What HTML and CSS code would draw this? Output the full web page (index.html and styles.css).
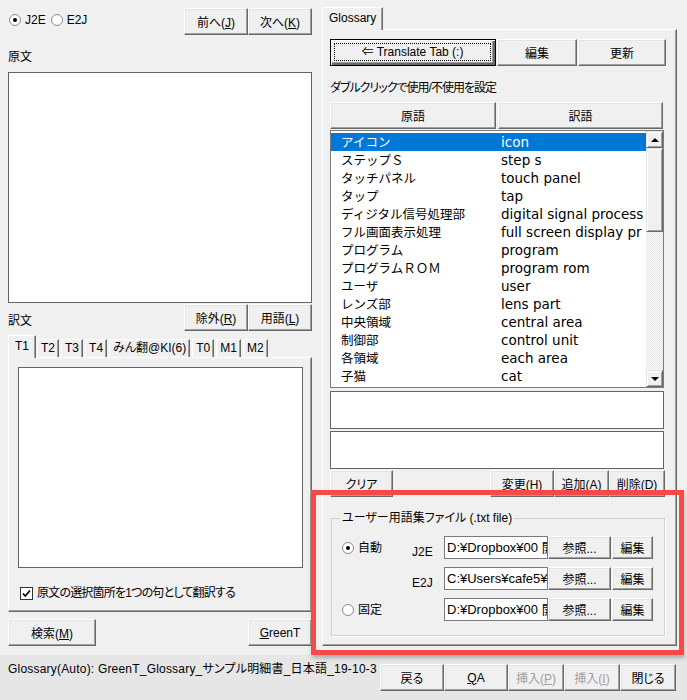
FILE: index.html
```html
<!DOCTYPE html>
<html lang="ja">
<head>
    <meta charset="UTF-8">
    <title>GreenT Glossary</title>
    <link rel="stylesheet" href="styles.css">
</head>
<body>
<div class="app">
    <div class="main">
        <!-- left side: source / translation -->
        <section class="left">
            <div class="top-row">
                <div class="radios">
                    <span class="radio"><span class="radio-dot on"></span>J2E</span>
                    <span class="radio"><span class="radio-dot"></span>E2J</span>
                </div>
                <div class="btn-pair">
                    <button class="btn w64">前へ(<u>J</u>)</button>
                    <button class="btn w64">次へ(<u>K</u>)</button>
                </div>
            </div>
            <div class="caption src-cap">原文</div>
            <div class="textbox src-box"></div>
            <div class="mid-row">
                <div class="caption mid-cap">訳文</div>
                <div class="btn-pair">
                    <button class="btn w64">除外(<u>R</u>)</button>
                    <button class="btn w64">用語(<u>L</u>)</button>
                </div>
            </div>
            <div class="tabstrip left-tabs">
                <span class="tab active">T1</span>
                <span class="tab">T2</span>
                <span class="tab">T3</span>
                <span class="tab">T4</span>
                <span class="tab">みん翻@KI(6)</span>
                <span class="tab">T0</span>
                <span class="tab">M1</span>
                <span class="tab">M2</span>
            </div>
            <div class="tab-panel left-panel">
                <div class="textbox out-box"></div>
                <div class="check">
                    <span class="checkbox">
                        <svg width="11" height="11" viewBox="0 0 11 11"><path d="M2 5.5 L4.3 8 L9 2.5" fill="none" stroke="#000" stroke-width="1.7"/></svg>
                    </span>
                    <span class="check-text">原文の選択箇所を1つの句として翻訳する</span>
                </div>
            </div>
            <div class="bottom-row">
                <button class="btn w88">検索(<u>M</u>)</button>
                <button class="btn w64"><u>G</u>reenT</button>
            </div>
        </section>

        <!-- right side: glossary tab -->
        <section class="right">
            <div class="tabstrip">
                <span class="tab active gloss-tab">Glossary</span>
            </div>
            <div class="tab-panel right-panel">
                <div class="tool-row">
                    <button class="btn default w166"><span class="focus">⇐ Translate Tab (:)</span></button>
                    <button class="btn w80">編集</button>
                    <button class="btn w88">更新</button>
                </div>
                <div class="note">ダブルクリックで使用/不使用を設定</div>
                <div class="list-head">
                    <button class="btn w166">原語</button>
                    <button class="btn w165">訳語</button>
                </div>
                <div class="list">
                    <div class="rows">
                        <div class="row selected"><span class="jp">アイコン</span><span class="en">icon</span></div>
                        <div class="row"><span class="jp">ステップＳ</span><span class="en">step s</span></div>
                        <div class="row"><span class="jp">タッチパネル</span><span class="en">touch panel</span></div>
                        <div class="row"><span class="jp">タップ</span><span class="en">tap</span></div>
                        <div class="row"><span class="jp">ディジタル信号処理部</span><span class="en">digital signal process</span></div>
                        <div class="row"><span class="jp">フル画面表示処理</span><span class="en">full screen display pr</span></div>
                        <div class="row"><span class="jp">プログラム</span><span class="en">program</span></div>
                        <div class="row"><span class="jp">プログラムＲＯＭ</span><span class="en">program rom</span></div>
                        <div class="row"><span class="jp">ユーザ</span><span class="en">user</span></div>
                        <div class="row"><span class="jp">レンズ部</span><span class="en">lens part</span></div>
                        <div class="row"><span class="jp">中央領域</span><span class="en">central area</span></div>
                        <div class="row"><span class="jp">制御部</span><span class="en">control unit</span></div>
                        <div class="row"><span class="jp">各領域</span><span class="en">each area</span></div>
                        <div class="row"><span class="jp">子猫</span><span class="en">cat</span></div>
                    </div>
                    <div class="scrollbar">
                        <div class="sb-btn"><span class="arrow up"></span></div>
                        <div class="sb-thumb"></div>
                        <div class="sb-track"></div>
                        <div class="sb-btn"><span class="arrow down"></span></div>
                    </div>
                </div>
                <div class="textbox entry-box first"></div>
                <div class="textbox entry-box"></div>
                <div class="edit-row">
                    <button class="btn w63">クリア</button>
                    <div class="edit-btns">
                        <button class="btn w64">変更(<u>H</u>)</button>
                        <button class="btn w55">追加(<u>A</u>)</button>
                        <button class="btn w56">削除(<u>D</u>)</button>
                    </div>
                </div>
                <fieldset class="user-files">
                    <legend>ユーザー用語集ファイル (.txt file)</legend>
                    <div class="file-row">
                        <span class="radio"><span class="radio-dot on"></span>自動</span>
                        <span class="lang">J2E</span>
                        <div class="path">D:¥Dropbox¥00 開</div>
                        <button class="btn small w63">参照...</button>
                        <button class="btn small w41">編集</button>
                    </div>
                    <div class="file-row">
                        <span></span>
                        <span class="lang">E2J</span>
                        <div class="path">C:¥Users¥cafe5¥</div>
                        <button class="btn small w63">参照...</button>
                        <button class="btn small w41">編集</button>
                    </div>
                    <div class="file-row">
                        <span class="radio"><span class="radio-dot"></span>固定</span>
                        <span class="lang"></span>
                        <div class="path">D:¥Dropbox¥00 開</div>
                        <button class="btn small w63">参照...</button>
                        <button class="btn small w41">編集</button>
                    </div>
                </fieldset>
            </div>
        </section>
    </div>

    <footer class="status">
        <div class="status-text">Glossary(Auto): GreenT_Glossary_サンプル明細書_日本語_19-10-3</div>
        <div class="footer-btns">
            <button class="btn w64">戻る</button>
            <button class="btn w64"><u>Q</u>A</button>
            <button class="btn w56" disabled>挿入(<u>P</u>)</button>
            <button class="btn w56" disabled>挿入(<u>I</u>)</button>
            <button class="btn w56">閉じる</button>
        </div>
    </footer>

    <!-- red highlight drawn over the user glossary group -->
    <div class="highlight"></div>
</div>
</body>
</html>
```

FILE: styles.css
```css
* {
    box-sizing: border-box;
}
body {
    margin: 0;
    width: 687px;
    height: 700px;
    overflow: hidden;
    background: #f0f0f0;
    font-family: "Liberation Sans", "Noto Sans CJK JP", sans-serif;
    font-size: 12px;
    color: #000;
    font-feature-settings: "palt";
}
.app {
    position: relative;
    height: 700px;
}
.main {
    display: flex;
    height: 655px;
    padding-left: 8px;
}

/* common controls */
.btn {
    height: 27px;
    padding: 0;
    background: #f0f0f0;
    border: 1px solid;
    border-color: #fff #696969 #696969 #fff;
    box-shadow: inset -1px -1px #a0a0a0, inset 1px 1px #e3e3e3;
    font: inherit;
    color: #000;
    flex-shrink: 0;
}
.btn:disabled {
    color: #a0a0a0;
}
.btn.default {
    border-color: #000;
    box-shadow: inset 1px 1px #fff, inset -2px -2px #696969, inset -3px -3px #a0a0a0;
}
.btn .focus {
    display: block;
    margin: 3px 4px 4px 3px;
    height: 18px;
    line-height: 16px;
    border: 1px dotted #000;
}
.btn.small {
    height: 23px;
}
.w41 { width: 41px; }
.w55 { width: 55px; }
.w56 { width: 56px; }
.w63 { width: 63px; }
.w64 { width: 64px; }
.w80 { width: 80px; }
.w88 { width: 88px; }
.w165 { width: 165px; }
.w166 { width: 166px; }

.textbox {
    background: #fff;
    border: 1px solid #646464;
}
.caption {
    line-height: 16px;
}
.radio {
    display: flex;
    align-items: center;
    gap: 4px;
    line-height: 16px;
}
.radio-dot {
    width: 12px;
    height: 12px;
    border-radius: 50%;
    border: 1px solid #8c8c8c;
    background: #fff;
    display: flex;
    align-items: center;
    justify-content: center;
}
.radio-dot.on::after {
    content: "";
    width: 4px;
    height: 4px;
    border-radius: 50%;
    background: #000;
}
.btn-pair {
    display: flex;
}

/* tabs */
.tabstrip {
    display: flex;
    align-items: flex-end;
}
.tab {
    height: 18px;
    line-height: 16px;
    padding: 0 3px;
    margin-right: 2px;
    border: 1px solid;
    border-bottom: none;
    border-color: #fff #696969 transparent #fff;
    box-shadow: inset -1px 0 #a0a0a0;
    white-space: nowrap;
}
.tab.active {
    position: relative;
    z-index: 1;
    height: 23px;
    margin-bottom: -1px;
    padding: 2px 6px 0;
    margin-right: 1px;
    background: #f0f0f0;
}
.tab-panel {
    border: 1px solid;
    border-color: #fff #696969 #696969 #fff;
    box-shadow: inset -1px -1px #a0a0a0;
}

/* left column */
.left {
    width: 304px;
    display: flex;
    flex-direction: column;
    padding-top: 8px;
}
.top-row {
    display: flex;
    justify-content: space-between;
    height: 27px;
}
.radios {
    display: flex;
    gap: 5px;
    padding: 4px 0 0 1px;
    align-items: flex-start;
}
.src-cap {
    padding: 14px 0 7px;
}
.src-box {
    height: 231px;
}
.mid-row {
    display: flex;
    justify-content: space-between;
    align-items: flex-end;
    height: 27px;
    margin-top: 1px;
}
.mid-cap {
    margin-bottom: 2px;
}
.left-tabs {
    height: 26px;
}
.left-panel {
    height: 255px;
    padding: 9px 0 0 9px;
}
.out-box {
    width: 285px;
    height: 201px;
}
.check {
    display: flex;
    align-items: center;
    gap: 4px;
    margin: 17px 0 0 2px;
    line-height: 16px;
}
.check-text {
    letter-spacing: -0.8px;
}
.checkbox {
    width: 13px;
    height: 13px;
    border: 1px solid #333;
    background: #fff;
    display: flex;
    align-items: center;
    justify-content: center;
}
.checkbox svg {
    display: block;
}
.bottom-row {
    display: flex;
    justify-content: space-between;
    margin-top: 7px;
}

/* right column */
.right {
    width: 355px;
    margin-left: 10px;
    display: flex;
    flex-direction: column;
    padding-top: 7px;
}
.gloss-tab {
    padding: 3px 5px 0 5px;
    height: 23px;
}
.right-panel {
    height: 617px;
    padding: 9px 0 0 7px;
}
.tool-row {
    display: flex;
    gap: 1px;
}
.note {
    line-height: 16px;
    margin-top: 14px;
    letter-spacing: -1px;
}
.list-head {
    display: flex;
    gap: 2px;
    margin-top: 6px;
}
.list {
    display: flex;
    width: 334px;
    height: 258px;
    margin-top: 1px;
    background: #fff;
    border: 1px solid #7a7a7a;
}
.rows {
    flex: 1;
    padding-top: 2px;
    overflow: hidden;
}
.row {
    display: flex;
    height: 18px;
    line-height: 18px;
    padding-left: 10px;
    white-space: nowrap;
}
.row.selected {
    background: #0078d7;
    color: #fff;
}
.row .jp {
    width: 160px;
    flex-shrink: 0;
    font-family: "Noto Sans CJK JP", sans-serif;
    font-size: 12.5px;
    font-feature-settings: normal;
}
.row .en {
    font-family: "DejaVu Sans", sans-serif;
    font-size: 13.5px;
}
.scrollbar {
    width: 17px;
    display: flex;
    flex-direction: column;
    background-color: #fff;
    background-image: conic-gradient(#e4e4e4 25%, transparent 0 50%, #e4e4e4 0 75%, transparent 0);
    background-size: 2px 2px;
}
.sb-btn, .sb-thumb {
    background: #f0f0f0;
    border: 1px solid;
    border-color: #e3e3e3 #696969 #696969 #e3e3e3;
    box-shadow: inset 1px 1px #fff, inset -1px -1px #a0a0a0;
}
.sb-btn {
    height: 17px;
    display: flex;
    align-items: center;
    justify-content: center;
}
.sb-thumb {
    height: 84px;
}
.sb-track {
    flex: 1;
}
.arrow {
    width: 0;
    height: 0;
    border-left: 4px solid transparent;
    border-right: 4px solid transparent;
}
.arrow.up {
    border-bottom: 4px solid #000;
}
.arrow.down {
    border-top: 4px solid #000;
}
.entry-box {
    width: 334px;
    height: 38px;
    margin-top: 2px;
}
.entry-box.first {
    margin-top: 3px;
}
.edit-row {
    display: flex;
    justify-content: space-between;
    width: 335px;
    margin-top: 1px;
}
.edit-btns {
    display: flex;
}
.user-files {
    width: 334px;
    margin: 13px 0 0 1px;
    padding: 10px 0 14px 10px;
    border: 1px solid #d0d0d0;
    box-shadow: 1px 1px #fff;
}
.user-files legend {
    padding: 0 2px;
    margin-left: -2px;
    line-height: 16px;
}
.file-row {
    display: grid;
    grid-template-columns: 70px 32px 104px 63px 41px;
    height: 23px;
    margin-bottom: 8px;
}
.file-row:last-child {
    margin-bottom: 0;
}
.file-row .btn.w41 {
    margin-left: 1px;
}
.lang {
    align-self: end;
    line-height: 16px;
    margin-bottom: -1px;
}
.path {
    height: 23px;
    background: #fff;
    border: 1px solid #7a7a7a;
    padding-left: 2px;
    font-size: 13px;
    line-height: 21px;
    white-space: nowrap;
    overflow: hidden;
}

/* bottom status bar */
.status {
    display: flex;
    height: 45px;
    background: #e6e6e6;
}
.status-text {
    width: 380px;
    padding: 6px 0 0 8px;
    line-height: 16px;
    letter-spacing: 0.2px;
    white-space: nowrap;
    overflow: hidden;
}
.footer-btns {
    display: flex;
    margin-top: 9px;
}

.highlight {
    position: absolute;
    left: 311px;
    top: 490px;
    width: 373px;
    height: 165px;
    border: 5px solid #f94848;
    box-shadow: 1px 3px 4px rgba(0, 0, 0, 0.25);
    pointer-events: none;
}
```
